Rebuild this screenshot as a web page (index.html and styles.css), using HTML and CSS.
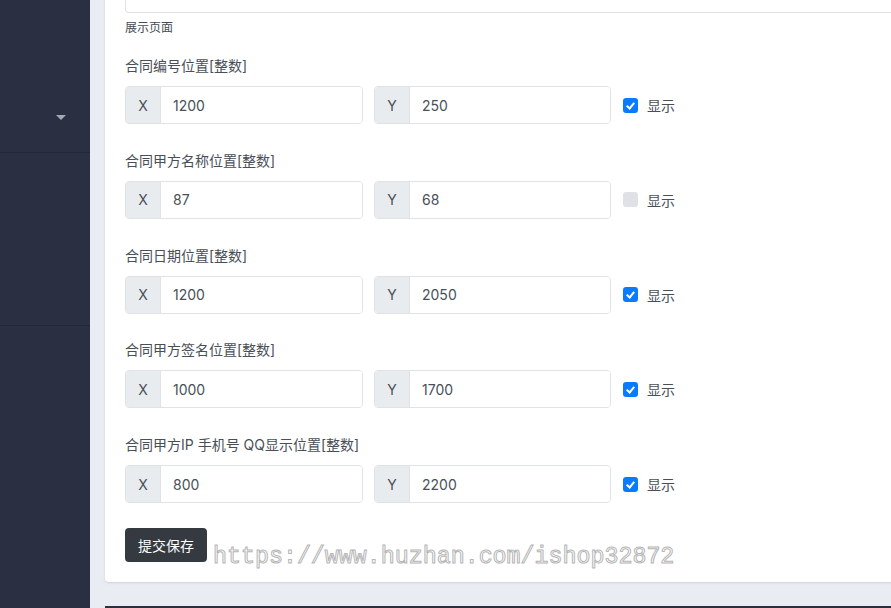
FILE: index.html
```html
<!DOCTYPE html>
<html lang="zh-CN">
<head>
<meta charset="utf-8">
<title>合同设置</title>
<link rel="stylesheet" href="styles.css">
</head>
<body>
<div class="layout">
  <aside class="sidebar">
    <div class="side-block side-first"><span class="caret"></span></div>
    <div class="side-block side-second"></div>
    <div class="side-rest"></div>
  </aside>
  <main class="main">
    <div class="card">
      <div class="top-field"></div>
      <div class="help">展示页面</div>

      <div class="form-group">
        <label class="label">合同编号位置[整数]</label>
        <div class="row">
          <div class="igroup"><span class="addon">X</span><input class="field" value="1200"></div>
          <div class="igroup"><span class="addon">Y</span><input class="field" value="250"></div>
          <label class="check"><span class="box on"></span><span>显示</span></label>
        </div>
      </div>

      <div class="form-group">
        <label class="label">合同甲方名称位置[整数]</label>
        <div class="row">
          <div class="igroup"><span class="addon">X</span><input class="field" value="87"></div>
          <div class="igroup"><span class="addon">Y</span><input class="field" value="68"></div>
          <label class="check"><span class="box"></span><span>显示</span></label>
        </div>
      </div>

      <div class="form-group">
        <label class="label">合同日期位置[整数]</label>
        <div class="row">
          <div class="igroup"><span class="addon">X</span><input class="field" value="1200"></div>
          <div class="igroup"><span class="addon">Y</span><input class="field" value="2050"></div>
          <label class="check"><span class="box on"></span><span>显示</span></label>
        </div>
      </div>

      <div class="form-group">
        <label class="label">合同甲方签名位置[整数]</label>
        <div class="row">
          <div class="igroup"><span class="addon">X</span><input class="field" value="1000"></div>
          <div class="igroup"><span class="addon">Y</span><input class="field" value="1700"></div>
          <label class="check"><span class="box on"></span><span>显示</span></label>
        </div>
      </div>

      <div class="form-group">
        <label class="label">合同甲方IP 手机号 QQ显示位置[整数]</label>
        <div class="row">
          <div class="igroup"><span class="addon">X</span><input class="field" value="800"></div>
          <div class="igroup"><span class="addon">Y</span><input class="field" value="2200"></div>
          <label class="check"><span class="box on"></span><span>显示</span></label>
        </div>
      </div>

      <div class="actions">
        <button class="btn">提交保存</button>
        <span class="watermark">https://www.huzhan.com/ishop32872</span>
      </div>
    </div>
    <div class="footer-line"></div>
  </main>
</div>
</body>
</html>
```
FILE: styles.css
```css
* { box-sizing: border-box; }
html, body {
  margin: 0;
  padding: 0;
  width: 891px;
  height: 608px;
  overflow: hidden;
  background: #e9ecf2;
  font-family: "Inter", "Noto Sans CJK SC", sans-serif;
  color: #495057;
}
.layout {
  display: flex;
  height: 608px;
}
.sidebar {
  width: 90px;
  flex: none;
  background: #2a2f41;
  display: flex;
  flex-direction: column;
}
.side-block {
  border-bottom: 1px solid #232838;
}
.side-first {
  height: 153px;
  display: flex;
  justify-content: flex-end;
  padding-top: 115px;
  padding-right: 24px;
}
.caret {
  width: 0;
  height: 0;
  border-left: 5px solid transparent;
  border-right: 5px solid transparent;
  border-top: 5px solid #a4a8b3;
}
.side-second {
  height: 173px;
}
.main {
  flex: 1;
  padding-left: 15px;
  display: flex;
  flex-direction: column;
  min-width: 0;
}
.card {
  background: #fff;
  width: 820px;
  margin-top: -30px;
  padding: 0 20px 20px 20px;
  border-radius: 4px;
  box-shadow: 0 1px 2px rgba(150, 160, 190, 0.35);
}
.top-field {
  height: 43px;
  border: 1px solid #dee2e6;
  border-top: none;
  border-radius: 0 0 4px 4px;
  width: 800px;
}
.help {
  font-size: 12px;
  line-height: 16px;
  margin-top: 7px;
  color: #444b55;
}
.form-group {
  margin-top: 19px;
}
.form-group + .form-group {
  margin-top: 25.75px;
}
.label {
  display: block;
  font-size: 14px;
  line-height: 21px;
  margin-bottom: 10px;
  color: #4a4f57;
}
.row {
  display: flex;
  align-items: center;
}
.igroup {
  display: flex;
  height: 38px;
  width: 238px;
  border: 1px solid #dfe2e7;
  border-radius: 4px;
  overflow: hidden;
  margin-right: 11px;
}
.igroup + .igroup {
  width: 237px;
  margin-right: 12px;
}
.addon {
  width: 35px;
  flex: none;
  background: #e9ecef;
  border-right: 1px solid #dfe2e7;
  display: flex;
  align-items: center;
  justify-content: center;
  font-size: 14px;
  color: #495057;
}
.field {
  flex: 1;
  min-width: 0;
  border: none;
  outline: none;
  padding: 0 12px;
  font-family: "Inter", sans-serif;
  font-size: 14px;
  color: #495057;
  background: #fff;
}
.check {
  display: flex;
  align-items: center;
  font-size: 14px;
  color: #4a4f57;
}
.box {
  width: 15px;
  height: 15px;
  border-radius: 3px;
  background: #dee2e6;
  margin-right: 9px;
  position: relative;
}
.box.on {
  background: #0a7bff;
}
.box.on::after {
  content: "";
  position: absolute;
  left: 5px;
  top: 3px;
  width: 3px;
  height: 6px;
  border-right: 2px solid #fff;
  border-bottom: 2px solid #fff;
  transform: rotate(40deg);
}
.actions {
  margin-top: 25px;
  display: flex;
  align-items: flex-end;
}
.btn {
  width: 82px;
  height: 34px;
  border: none;
  border-radius: 4px;
  background: #343a40;
  color: #fff;
  font-family: "Noto Sans CJK SC", sans-serif;
  font-size: 14px;
  padding: 0;
}
.watermark {
  margin-left: 6px;
  margin-bottom: -10px;
  font-family: "Liberation Mono", monospace;
  font-size: 23.3px;
  color: transparent;
  -webkit-text-stroke: 1px #b5b5b5;
  white-space: nowrap;
  line-height: 30px;
}
.footer-line {
  margin-top: 24px;
  height: 2px;
  background: #2a2f41;
}
```
